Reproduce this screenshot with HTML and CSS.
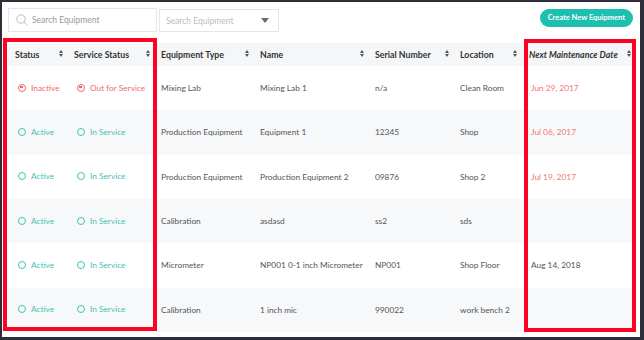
FILE: index.html
```html
<!doctype html>
<html>
<head>
    <meta charset="utf-8">
    <title>Equipment</title>
    <link rel="stylesheet" href="styles.css">
</head>
<body>
    <div class="screen">
        <div class="toolbar">
            <div class="search">
                <svg class="search-icon" width="12" height="12" viewBox="0 0 12 12">
                    <circle cx="5" cy="5" r="4.2" fill="none" stroke="#b5b5b5" stroke-width="0.9"/>
                    <line x1="8" y1="8" x2="11.5" y2="11.5" stroke="#b5b5b5" stroke-width="0.9"/>
                </svg>
                <span>Search Equipment</span>
            </div>
            <div class="select">
                <span>Search Equipment</span>
                <span class="caret"></span>
            </div>
            <div class="spacer"></div>
            <div class="btn">Create New Equipment</div>
        </div>

        <table class="grid">
            <colgroup>
                <col style="width:59px">
                <col style="width:87px">
                <col style="width:99px">
                <col style="width:115px">
                <col style="width:85px">
                <col style="width:68px">
                <col style="width:114px">
            </colgroup>
            <tr class="heading">
                <td>Status<i class="sort"></i></td>
                <td>Service Status<i class="sort"></i></td>
                <td>Equipment Type<i class="sort"></i></td>
                <td>Name<i class="sort"></i></td>
                <td>Serial Number<i class="sort"></i></td>
                <td>Location<i class="sort"></i></td>
                <td class="em">Next Maintenance Date<i class="sort"></i></td>
            </tr>
            <tr class="item">
                <td><span class="st off"><b class="dot"></b>Inactive</span></td>
                <td><span class="st off"><b class="dot"></b>Out for Service</span></td>
                <td>Mixing Lab</td>
                <td>Mixing Lab 1</td>
                <td>n/a</td>
                <td>Clean Room</td>
                <td class="date due">Jun 29, 2017</td>
            </tr>
            <tr class="item alt">
                <td><span class="st on"><b class="dot"></b>Active</span></td>
                <td><span class="st on"><b class="dot"></b>In Service</span></td>
                <td>Production Equipment</td>
                <td>Equipment 1</td>
                <td>12345</td>
                <td>Shop</td>
                <td class="date due">Jul 06, 2017</td>
            </tr>
            <tr class="item">
                <td><span class="st on"><b class="dot"></b>Active</span></td>
                <td><span class="st on"><b class="dot"></b>In Service</span></td>
                <td>Production Equipment</td>
                <td>Production Equipment 2</td>
                <td>09876</td>
                <td>Shop 2</td>
                <td class="date due">Jul 19, 2017</td>
            </tr>
            <tr class="item alt">
                <td><span class="st on"><b class="dot"></b>Active</span></td>
                <td><span class="st on"><b class="dot"></b>In Service</span></td>
                <td>Calibration</td>
                <td>asdasd</td>
                <td>ss2</td>
                <td>sds</td>
                <td class="date"></td>
            </tr>
            <tr class="item">
                <td><span class="st on"><b class="dot"></b>Active</span></td>
                <td><span class="st on"><b class="dot"></b>In Service</span></td>
                <td>Micrometer</td>
                <td>NP001 0-1 inch Micrometer</td>
                <td>NP001</td>
                <td>Shop Floor</td>
                <td class="date">Aug 14, 2018</td>
            </tr>
            <tr class="item alt">
                <td><span class="st on"><b class="dot"></b>Active</span></td>
                <td><span class="st on"><b class="dot"></b>In Service</span></td>
                <td>Calibration</td>
                <td>1 inch mic</td>
                <td>990022</td>
                <td>work bench 2</td>
                <td class="date"></td>
            </tr>
        </table>

        <!-- annotation boxes drawn over the table -->
        <div class="mark mark-left"></div>
        <div class="mark mark-right"></div>
    </div>
</body>
</html>
```

FILE: styles.css
```css
body {
    margin: 0;
    font-family: Lato, "Open Sans", sans-serif;
}

.screen {
    position: relative;
    width: 644px;
    height: 340px;
    box-sizing: border-box;
    border: solid #2e2e38;
    border-width: 2px 4px 3px 2px;
    background: #fff;
    padding: 6px 5px 0 6px;
    overflow: hidden;
}

.toolbar {
    display: flex;
    align-items: flex-start;
    height: 24px;
}

.search {
    width: 149px;
    height: 24px;
    box-sizing: border-box;
    border: 1px solid #e6e6e6;
    display: flex;
    align-items: center;
    padding-left: 7px;
    font-size: 8.5px;
    color: #9a9a9a;
}

.search-icon {
    margin-right: 4px;
}

.select {
    width: 120px;
    height: 23px;
    margin-top: 1px;
    margin-left: 2px;
    box-sizing: border-box;
    border: 1px solid #e6e6e6;
    display: flex;
    align-items: center;
    justify-content: space-between;
    padding: 0 9px 0 6px;
    font-size: 8.5px;
    color: #bdbdbd;
}

.caret {
    width: 0;
    height: 0;
    border-left: 4.5px solid transparent;
    border-right: 4.5px solid transparent;
    border-top: 5px solid #6a6a6a;
}

.spacer {
    flex: 1;
}

.btn {
    margin-top: 1px;
    margin-right: 2px;
    height: 18px;
    line-height: 18px;
    padding: 0 8px;
    border-radius: 9px;
    background: #1dbfae;
    color: #fff;
    font-size: 7.5px;
    font-weight: bold;
    white-space: nowrap;
}

.grid {
    margin-top: 11px;
    width: 627px;
    table-layout: fixed;
    border-collapse: collapse;
    font-size: 8.3px;
    color: #555;
}

.grid td {
    padding: 0 4px 0 7px;
    white-space: nowrap;
    overflow: hidden;
}

.grid tr.heading td {
    height: 23px;
    background: #f5f6f8;
    font-weight: bold;
    font-size: 8.8px;
    color: #333;
}

.grid tr.heading td.em {
    font-style: italic;
    padding-left: 8px;
}

.sort {
    float: right;
    width: 4px;
    height: 8px;
    position: relative;
    margin-top: 1px;
}

.sort::before,
.sort::after {
    content: "";
    position: absolute;
    left: 0;
    border-left: 2px solid transparent;
    border-right: 2px solid transparent;
}

.sort::before {
    top: 0;
    border-bottom: 3px solid #555;
}

.sort::after {
    top: 4px;
    border-top: 3px solid #555;
}

.grid tr.item td {
    height: 44.33px;
}

.grid tr.item td.date {
    padding-left: 10px;
}

.grid tr.alt td {
    background: #f7f8fa;
}

.st {
    display: inline-flex;
    align-items: center;
    margin-left: 3px;
}

.dot {
    width: 8px;
    height: 8px;
    box-sizing: border-box;
    border-radius: 50%;
    border: 1.6px solid currentColor;
    margin-right: 5px;
    position: relative;
}

.st.on {
    color: #3fc3b5;
}

.st.off {
    color: #f06a6a;
}

.st.off .dot::after {
    content: "";
    position: absolute;
    left: 1.2px;
    top: 1.6px;
    width: 2.4px;
    height: 1.6px;
    background: currentColor;
}

.grid td.due {
    color: #f27777;
}

.mark {
    position: absolute;
    border: 4px solid #fb0424;
    box-sizing: border-box;
}

.mark-left {
    left: 1px;
    top: 36px;
    width: 154px;
    height: 293px;
}

.mark-right {
    left: 522px;
    top: 37px;
    width: 112px;
    height: 293px;
}
```
